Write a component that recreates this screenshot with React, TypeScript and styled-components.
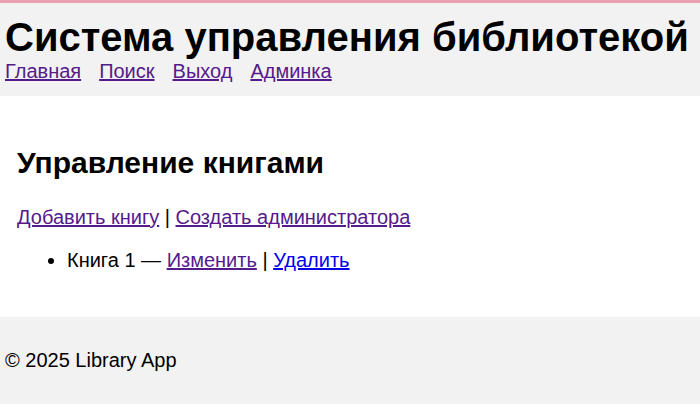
import React from "react";
import styled, { createGlobalStyle } from "styled-components";

const GlobalStyle = createGlobalStyle`
  html, body {
    margin: 0;
    padding: 0;
    background: #ffffff;
  }
  body {
    font-family: "Liberation Sans", Arial, sans-serif;
    font-size: 20px;
    color: #000000;
  }
`;

const TopLine = styled.div`
  height: 3px;
  background: #e9a1b1;
`;

const Header = styled.header`
  background: #f2f2f2;
  padding: 11px 5px 13px;
`;

const Title = styled.h1`
  margin: 0;
  font-size: 40px;
  font-weight: bold;
  line-height: 46px;
  white-space: nowrap;
`;

const Nav = styled.nav`
  display: flex;
  gap: 18px;
  line-height: 23px;
`;

const Link = styled.a<{ $visited?: boolean }>`
  color: ${(p) => (p.$visited ? "#551a8b" : "#0000ee")};
  text-decoration: underline;
  cursor: pointer;
`;

const Main = styled.main`
  padding: 25px 17px;
`;

const Heading = styled.h2`
  margin: 25px 0;
  font-size: 30px;
  font-weight: bold;
  line-height: 34.5px;
`;

const Actions = styled.p`
  margin: 0 0 20px;
  line-height: 23px;
`;

const BookList = styled.ul`
  margin: 0 0 20px;
  padding-left: 50px;
  line-height: 23px;
`;

const BookItem = styled.li`
  list-style: disc;
`;

const Footer = styled.footer`
  background: #f2f2f2;
  padding: 12px 5px;
`;

const FooterText = styled.p`
  margin: 20px 0;
  line-height: 23px;
`;

export default function App() {
  return (
    <>
      <GlobalStyle />
      <TopLine />
      <Header>
        <Title>Система управления библиотекой</Title>
        <Nav>
          <Link $visited>Главная</Link>
          <Link $visited>Поиск</Link>
          <Link $visited>Выход</Link>
          <Link $visited>Админка</Link>
        </Nav>
      </Header>
      <Main>
        <Heading>Управление книгами</Heading>
        <Actions>
          <Link $visited>Добавить книгу</Link> | <Link $visited>Создать администратора</Link>
        </Actions>
        <BookList>
          <BookItem>
            Книга 1 — <Link $visited>Изменить</Link> | <Link>Удалить</Link>
          </BookItem>
        </BookList>
      </Main>
      <Footer>
        <FooterText>© 2025 Library App</FooterText>
      </Footer>
    </>
  );
}
